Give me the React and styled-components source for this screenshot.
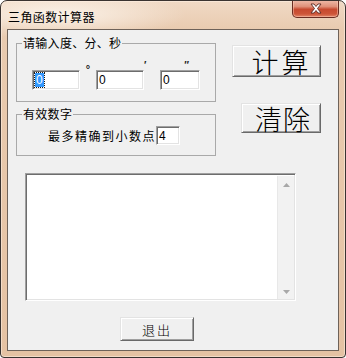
import React from "react";
import styled, { createGlobalStyle } from "styled-components";

const GlobalStyle = createGlobalStyle`
  html, body { margin: 0; padding: 0; background: #ffffff; }
  body { font-family: "Noto Sans CJK SC", "Liberation Sans", sans-serif; }
  #root { width: 346px; height: 358px; }
`;

const Window = styled.div`
  width: 346px;
  height: 358px;
  box-sizing: border-box;
  border: 1px solid #3a3330;
  border-radius: 7px 7px 4px 4px;
  background:
    radial-gradient(ellipse 130px 24px at 55px 14px, rgba(255, 250, 244, 0.8), rgba(255, 250, 244, 0) 100%),
    linear-gradient(180deg, #f0d9c5 0px, #e9cbb0 28px, #e5c2a3 100%);
  box-shadow: inset 0 0 0 1px rgba(255, 240, 228, 0.55);
  display: flex;
  flex-direction: column;
  overflow: hidden;
`;

const TitleBar = styled.div`
  height: 28px;
  flex: none;
  display: flex;
  justify-content: space-between;
  align-items: flex-start;
  padding: 0 6px 0 7px;
`;

const Title = styled.span`
  margin-top: 9px;
  font-size: 12px;
  line-height: 13px;
  letter-spacing: 0.4px;
  color: #000;
`;

const CloseButton = styled.div`
  width: 47px;
  height: 18px;
  margin-top: -1px;
  box-sizing: border-box;
  border: 1px solid #6a2d22;
  border-top: none;
  border-radius: 0 0 5px 5px;
  background: linear-gradient(180deg, #efbcaa 0%, #e0917a 38%, #c74a2f 55%, #cd5538 82%, #e2876a 100%);
  box-shadow: inset 0 0 0 1px rgba(255, 215, 195, 0.45);
  display: flex;
  align-items: center;
  justify-content: center;
`;

const Client = styled.div`
  flex: 1;
  margin: 0 6px 6px;
  border: 1px solid #6e6259;
  background: #f0f0f0;
  display: flex;
  flex-direction: column;
  align-items: flex-start;
  color: #000;
`;

const TopRow = styled.div`
  display: flex;
  margin: 6px 0 0 8px;
`;

const LeftCol = styled.div`
  width: 200px;
  display: flex;
  flex-direction: column;
  gap: 5px;
`;

const GroupBox = styled.fieldset`
  margin: 0;
  min-width: 0;
  padding: ${(p) => p.$top}px 0 ${(p) => p.$bottom}px 5px;
  border: 1px solid #a9a9a9;
`;

const Legend = styled.legend`
  margin-left: 0;
  padding: 0 1px;
  font-size: 12px;
  line-height: 14px;
  letter-spacing: 0.3px;
`;

const AngleGrid = styled.div`
  display: grid;
  margin-left: 10px;
  grid-template-columns: 48px 16px 48px 16px 40px;
  grid-template-rows: 10px 20px;
`;

const Mark = styled.span`
  grid-row: 1;
  grid-column: ${(p) => p.$col};
  justify-self: ${(p) => p.$justify};
  margin-top: ${(p) => p.$top}px;
  margin-right: ${(p) => p.$right || 0}px;
  font-family: "Liberation Sans", "DejaVu Sans", sans-serif;
  font-size: ${(p) => p.$size}px;
  line-height: 10px;
  font-weight: bold;
  color: #222;
`;

const Field = styled.div`
  grid-row: 2;
  grid-column: ${(p) => p.$col};
  width: ${(p) => p.$w}px;
  height: ${(p) => p.$h}px;
  box-sizing: border-box;
  border: 1px solid;
  border-color: #a0a0a0 #ffffff #ffffff #a0a0a0;
  box-shadow: inset 1px 1px #6d6d6d, inset -1px -1px #e3e3e3;
  background: #fff;
  font-family: "Liberation Sans", sans-serif;
  font-size: 12px;
  line-height: 14px;
  padding: 2px 0 0 2px;
  color: #000;
`;

const Selected = styled.span`
  display: inline-block;
  background: #3399ff;
  color: #fff;
  padding: 0 1px;
  outline: 1px dotted #1a1a1a;
`;

const PrecisionRow = styled.div`
  display: flex;
  align-items: center;
  margin-left: 26px;
`;

const PrecisionText = styled.span`
  font-size: 12px;
  line-height: 14px;
  letter-spacing: 1.5px;
`;

const RightCol = styled.div`
  width: 89px;
  margin-left: 16px;
  display: flex;
  flex-direction: column;
  align-items: flex-end;
`;

const Button = styled.div`
  width: ${(p) => p.$w}px;
  height: ${(p) => p.$h}px;
  margin-top: ${(p) => p.$top}px;
  box-sizing: border-box;
  border: 1px solid;
  border-color: #e3e3e3 #696969 #696969 #e3e3e3;
  box-shadow: inset 1px 1px #ffffff, inset -1px -1px #a0a0a0;
  background: #f0f0f0;
  display: flex;
  align-items: center;
  justify-content: center;
  padding-left: ${(p) => p.$indent || 0}px;
  font-size: ${(p) => p.$size}px;
  line-height: 1;
  letter-spacing: ${(p) => p.$spacing || 0}px;
  font-weight: 300;
  color: #000;
`;

const OutputBox = styled.div`
  margin: 17px 0 0 17px;
  width: 271px;
  height: 128px;
  box-sizing: border-box;
  border: 1px solid;
  border-color: #a0a0a0 #ffffff #ffffff #a0a0a0;
  box-shadow: inset 1px 1px #6d6d6d, inset -1px -1px #e3e3e3;
  background: #fff;
  display: flex;
  padding: 2px 1px 1px 2px;
`;

const OutputArea = styled.div`
  flex: 1;
  background: #fff;
`;

const Scrollbar = styled.div`
  width: 17px;
  background: #f2f2f2;
  border-left: 1px solid #e8e8e8;
  display: flex;
  flex-direction: column;
  justify-content: space-between;
  align-items: center;
  padding: 7px 0 5px;
  box-sizing: border-box;
`;

const ExitButton = styled(Button)`
  margin-left: 112px;
`;

const Arrow = ({ down }) => (
  <svg width="7" height="4" viewBox="0 0 7 4">
    <path d={down ? "M0 0 L7 0 L3.5 4 Z" : "M0 4 L7 4 L3.5 0 Z"} fill="#a8a8a8" />
  </svg>
);

export default function App() {
  return (
    <>
      <GlobalStyle />
      <Window>
        <TitleBar>
          <Title>三角函数计算器</Title>
          <CloseButton>
            <svg width="14" height="11" viewBox="0 0 14 11">
              <path
                d="M2 1 L5 1 L7 3.5 L9 1 L12 1 L8.5 5.5 L12 10 L9 10 L7 7.5 L5 10 L2 10 L5.5 5.5 Z"
                fill="#ffffff"
                stroke="#5b2a22"
                strokeWidth="0.9"
                strokeLinejoin="round"
              />
            </svg>
          </CloseButton>
        </TitleBar>
        <Client>
          <TopRow>
            <LeftCol>
              <GroupBox $top={10} $bottom={11}>
                <Legend>请输入度、分、秒</Legend>
                <AngleGrid>
                  <Mark $col={2} $justify="center" $top={4} $size={11}>°</Mark>
                  <Mark $col={4} $justify="start" $top={1} $size={10}>′</Mark>
                  <Mark $col={5} $justify="end" $top={1} $size={10} $right={11}>″</Mark>
                  <Field $col={1} $w={48} $h={20}>
                    <Selected>0</Selected>
                  </Field>
                  <Field $col={3} $w={48} $h={20}>0</Field>
                  <Field $col={5} $w={40} $h={20}>0</Field>
                </AngleGrid>
              </GroupBox>
              <GroupBox $top={5} $bottom={10}>
                <Legend>有效数字</Legend>
                <PrecisionRow>
                  <PrecisionText>最多精确到小数点</PrecisionText>
                  <Field $w={24} $h={19}>4</Field>
                </PrecisionRow>
              </GroupBox>
            </LeftCol>
            <RightCol>
              <Button $w={89} $h={32} $top={9} $size={27} $spacing={3} $indent={10}>计算</Button>
              <Button $w={80} $h={30} $top={26} $size={27} $spacing={1} $indent={4}>清除</Button>
            </RightCol>
          </TopRow>
          <OutputBox>
            <OutputArea />
            <Scrollbar>
              <Arrow />
              <Arrow down />
            </Scrollbar>
          </OutputBox>
          <ExitButton $w={74} $h={24} $top={16} $size={13} $spacing={2}>退出</ExitButton>
        </Client>
      </Window>
    </>
  );
}
